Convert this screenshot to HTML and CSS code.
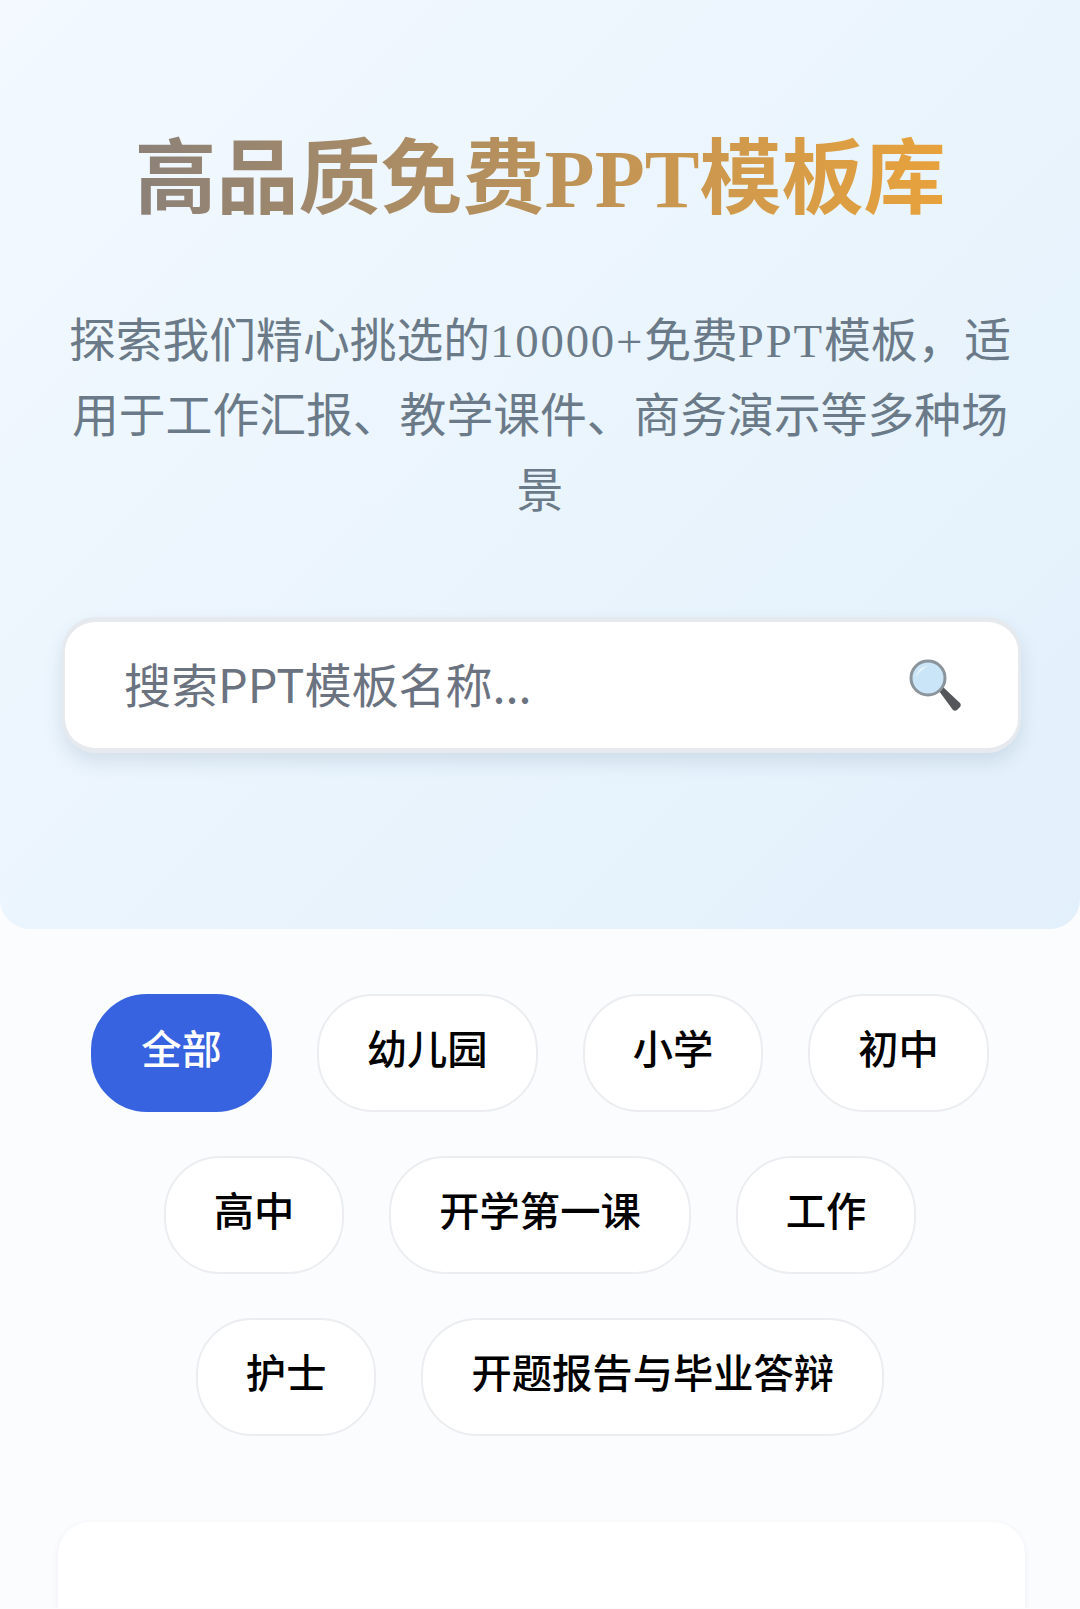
FILE: index.html
```html
<!DOCTYPE html>
<html lang="zh-CN">
<head>
    <meta charset="UTF-8">
    <meta name="viewport" content="width=device-width, initial-scale=1.0">
    <title>高品质免费PPT模板库</title>
    <link rel="stylesheet" href="styles.css">
</head>
<body>
    <section class="hero">
        <h1 class="hero-title"><span>高品质免费PPT模板库</span></h1>
        <p class="hero-desc">探索我们精心挑选的<span class="latin">10000+</span>免费<span class="latin">PPT</span>模板，适<br>用于工作汇报、教学课件、商务演示等多种场<br>景</p>
        <div class="search-box">
            <input class="search-input" type="text" placeholder="搜索PPT模板名称...">
            <svg class="search-icon" width="56" height="56" viewBox="0 0 56 56" xmlns="http://www.w3.org/2000/svg">
                <path d="M33 34L37 30L54 46C55 47 55 49 54 50L51 53C50 54 48 54 47 53Z" fill="#555659"/>
                <circle cx="22" cy="21" r="17" fill="#c9e5f7" stroke="#8b949b" stroke-width="3"/>
                <path d="M10 20C11 14 16 9 23 9C17 11 13 15 10 20Z" fill="#eef8fd"/>
            </svg>
        </div>
    </section>
    <nav class="tags">
        <a class="tag active">全部</a>
        <a class="tag">幼儿园</a>
        <a class="tag">小学</a>
        <a class="tag">初中</a>
        <a class="tag">高中</a>
        <a class="tag">开学第一课</a>
        <a class="tag">工作</a>
        <a class="tag">护士</a>
        <a class="tag">开题报告与毕业答辩</a>
    </nav>
    <div class="card"></div>
</body>
</html>
```

FILE: styles.css
```css
html, body {
    margin: 0;
}
body {
    background: #fbfcfe;
    font-family: "Noto Sans CJK SC", "Noto Sans", sans-serif;
}
.hero {
    height: 929px;
    box-sizing: border-box;
    padding: 132px 60px 0;
    background: linear-gradient(135deg, #f3f9ff 0%, #e2f0fb 100%);
    border-radius: 0 0 30px 30px;
    text-align: center;
}
.hero-title {
    margin: 0;
    font-family: "Liberation Serif", "Noto Sans CJK SC", serif;
    font-size: 82px;
    line-height: 96px;
    font-weight: 700;
}
.hero-title span {
    background: linear-gradient(90deg, #8c8178 0%, #e8a23c 100%);
    -webkit-background-clip: text;
    background-clip: text;
    color: transparent;
}
.hero-desc {
    margin: 76px -10px 0;
    font-family: "Liberation Serif", "Noto Sans CJK SC", serif;
    font-size: 46.8px;
    line-height: 75px;
    color: #6b7a88;
}
.hero-desc .latin {
    letter-spacing: 1.8px;
}
.search-box {
    display: flex;
    align-items: center;
    margin: 88px 0 0 2px;
    width: 959px;
    height: 136px;
    box-sizing: border-box;
    padding: 0 56px 6px 59px;
    background: #fff;
    border: solid #e6eaee;
    border-width: 5px 3px;
    border-radius: 34px;
    box-shadow: 0 9px 18px rgba(60, 90, 120, 0.14);
}
.search-input {
    flex: 1;
    min-width: 0;
    border: 0;
    outline: 0;
    padding: 0;
    background: none;
    font: inherit;
    font-size: 47px;
}
.search-input::placeholder {
    color: #6b7280;
    opacity: 1;
}
.search-icon {
    margin-top: 6px;
}
.tags {
    display: flex;
    flex-wrap: wrap;
    justify-content: center;
    gap: 44px 45px;
    padding: 65px 70px 0;
}
.tag {
    display: flex;
    align-items: center;
    height: 118px;
    box-sizing: border-box;
    padding: 0 48px 14px;
    background: #fff;
    border: 2px solid #ebedf0;
    border-radius: 56px;
    color: #000;
    font-size: 40.3px;
    font-weight: 500;
}
.tag.active {
    background: #3763e0;
    border-color: #3763e0;
    color: #fff;
}
.card {
    height: 86px;
    margin: 86px 55px 0 58px;
    background: #fff;
    border-radius: 32px 32px 0 0;
    box-shadow: 0 2px 6px rgba(60, 70, 90, 0.08);
}
```
